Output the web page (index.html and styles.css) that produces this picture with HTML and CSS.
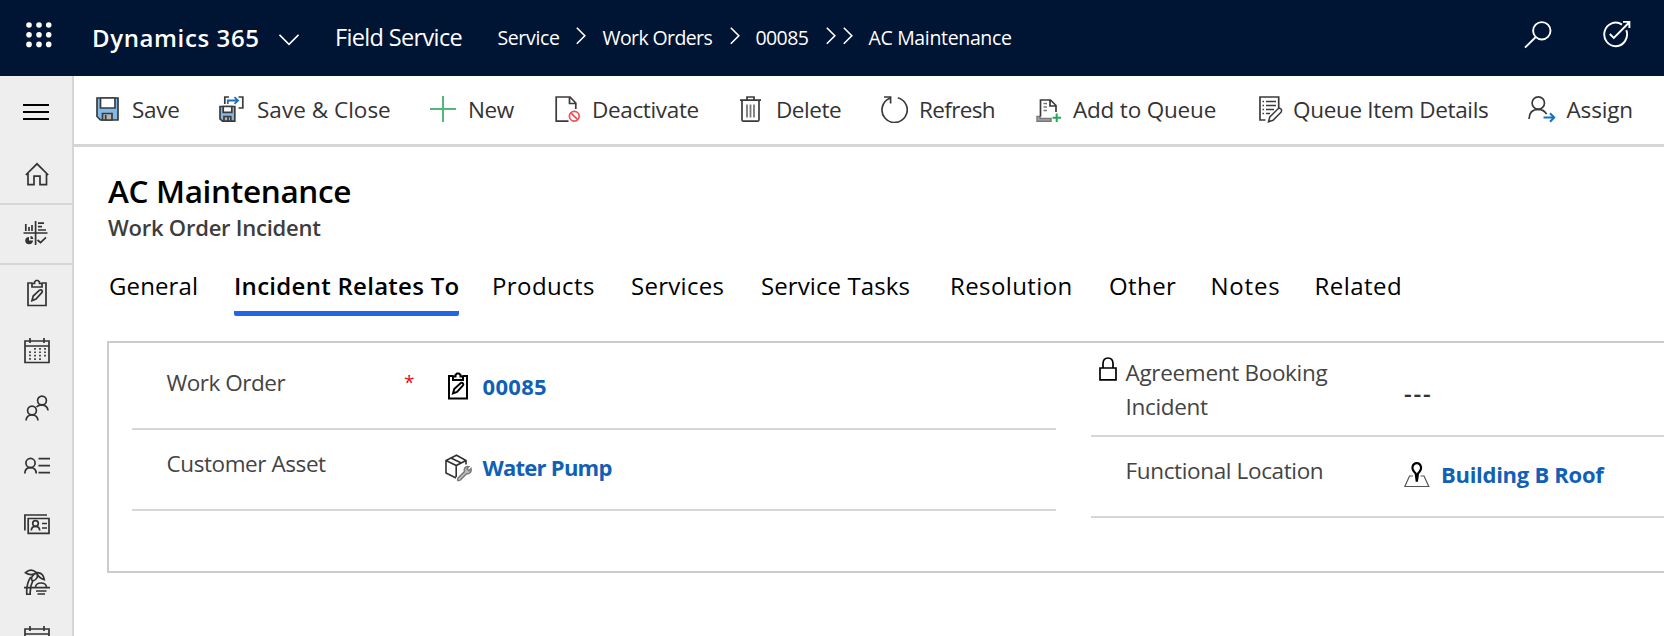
FILE: index.html
```
<!DOCTYPE html>
<html lang="en">
<head>
<meta charset="utf-8">
<title>AC Maintenance - Dynamics 365</title>
<link rel="stylesheet" href="styles.css">
</head>
<body>
<svg class="defs" aria-hidden="true">
  <symbol id="clipboard" viewBox="0 0 26 28">
    <path d="M8.5 4H4V26.5H22V4H17.5M8 8V4.5H10.5V3L12 1.5H14L15.5 3V4.5H18V8Z" />
    <path d="M8 21.5L9.2 17L15.5 11.2Q17 10.4 18 11.4Q18.8 12.5 17.8 13.6L12 20L8 21.5Z" />
  </symbol>
  <symbol id="calendar" viewBox="0 0 26 26">
    <path d="M1 3H25V24.5H1ZM1 8H25M6 0V5M20 0V5" />
    <path stroke-dasharray="1.7 1.7" d="M6 13.2V22M11 10V22M16 10V22M21 10V18.7" />
  </symbol>
</svg>

<header class="topbar">
  <svg class="waffle" width="26" height="26" viewBox="0 0 26 26">
    <g fill="#fff"><circle cx="3" cy="3" r="2.8"/><circle cx="13" cy="3" r="2.8"/><circle cx="22.7" cy="3" r="2.8"/><circle cx="3" cy="12.7" r="2.8"/><circle cx="13" cy="12.7" r="2.8"/><circle cx="22.7" cy="12.7" r="2.8"/><circle cx="3" cy="22.4" r="2.8"/><circle cx="13" cy="22.4" r="2.8"/><circle cx="22.7" cy="22.4" r="2.8"/></g>
  </svg>
  <span class="brand">Dynamics 365</span>
  <svg class="chev-down" width="20" height="12" viewBox="0 0 20 12"><path d="M.5 .8L10 10.3L19.5 .8"/></svg>
  <span class="app">Field Service</span>
  <nav class="crumbs">
    <span class="c-service">Service</span>
    <svg class="chev" width="10" height="18" viewBox="0 0 10 18"><path d="M.8 .7L8.8 8.7L.8 16.7"/></svg>
    <span class="c-orders">Work Orders</span>
    <svg class="chev" width="10" height="18" viewBox="0 0 10 18"><path d="M.8 .7L8.8 8.7L.8 16.7"/></svg>
    <span class="c-number">00085</span>
    <svg class="chev" width="28" height="18" viewBox="0 0 28 18"><path d="M.8 .7L8.8 8.7L.8 16.7M17.8 .7L25.8 8.7L17.8 16.7"/></svg>
    <span class="c-record">AC Maintenance</span>
  </nav>
  <svg class="search" width="28" height="28" viewBox="0 0 28 28"><circle cx="17.8" cy="9.8" r="8.7"/><path d="M11.8 16L1 26.6"/></svg>
  <svg class="target" width="28" height="28" viewBox="0 0 28 28"><path d="M19 4.6A11.4 11.8 0 1 0 23.3 10.2M6.8 14L10.8 18L25.6 3M20 1.9H26.4V8"/></svg>
</header>

<div class="body">
  <aside class="rail">
    <div class="cell menu"><svg width="26" height="16" viewBox="0 0 26 16"><path d="M0 1H26M0 8H26M0 15H26"/></svg></div>
    <div class="cell home"><svg width="26" height="26" viewBox="0 0 26 26"><path d="M1.8 14L13 2.8L24.2 14M4 12V23.7H10V15.2H16V23.7H22.5V12"/></svg></div>
    <div class="cell dash"><svg width="26" height="26" viewBox="0 0 26 26"><path d="M12.6 1V25M.5 13H24.5M2.8 4V11M6 7V11M9 5V11M15 3.2H21M15 6.6H19M15 10H23"/><path d="M14.5 20L17.5 22.5L23 17.3"/><path class="solid" d="M6 17V20.5H10Q9.7 24.3 6 24.3Q2.2 24 2.2 20.5Q2.4 17 6 17ZM7.5 16Q10 16 10.3 19H7.5Z"/></svg></div>
    <div class="cell r57"><svg width="26" height="28"><use href="#clipboard"/></svg></div>
    <div class="cell r58"><svg width="26" height="26"><use href="#calendar"/></svg></div>
    <div class="cell r57"><svg width="26" height="26" viewBox="0 0 26 26"><circle cx="18" cy="5.5" r="4.4"/><circle cx="8" cy="15.5" r="4.4"/><path d="M2 25.5Q2.5 20 8 20Q13.5 20 14 25.5M12.5 12Q14.5 9.8 18 9.8Q23.5 10.3 24 15.5"/></svg></div>
    <div class="cell r58"><svg width="26" height="26" viewBox="0 0 26 26"><circle cx="6.5" cy="10" r="4.6"/><path d="M.8 20.5Q1 14.6 6.5 14.6Q12 14.6 12.2 20.5M14.5 5.6H26M14.5 12.6H26M14.5 19.6H26"/></svg></div>
    <div class="cell r58"><svg width="26" height="26" viewBox="0 0 26 26"><path d="M.9 19.5V4H23M4.2 7.5H25V22.4H4.2ZM18 12.5H23M18 17H23"/><circle cx="11.5" cy="12.5" r="2.8"/><path d="M7.3 19.5Q7.5 15.3 11.5 15.3Q15.5 15.3 15.7 19.5"/></svg></div>
    <div class="cell r58"><svg width="26" height="26" viewBox="0 0 26 26"><path d="M1.5 3.7Q7-1.5 12.5 3.7Q7 7.6 1.5 3.7ZM12.5 3.7Q19 3 20.3 10.7Q15 9.5 12.5 3.7ZM12.5 3.7Q15.5 9.5 8.5 12.3Q5.5 7.5 12.5 3.7M6.8 8Q2 15 2.8 25.3H6.2Q5.8 17.5 8.7 12.2M0 18.7H26M11.5 18Q12 14 17 14Q22 14 22.5 18M12 22H22.5M13.5 25H21"/></svg></div>
    <div class="cell r57"><svg width="26" height="26"><use href="#calendar"/></svg></div>
  </aside>

  <main class="main">
    <div class="commands">
      <div class="cmd save"><svg width="26" height="28" viewBox="0 0 26 28"><path fill="#83b9e6" d="M2 3H23V25H5.5L2 21.5Z"/><path fill="#fff" d="M5.5 3H20V13H5.5Z"/><path fill="#b5b5b5" d="M7.5 18.5H17V25H7.5Z"/><path d="M10.7 20V25"/></svg><span>Save</span></div>
      <div class="cmd close"><svg width="26" height="28" viewBox="0 0 26 28"><path fill="#83b9e6" d="M2 11.5H16.8V26.2H4.5L2 23.8Z"/><path fill="#fff" d="M5.2 11.5H13.8V17.3H5.2Z"/><path fill="#b5b5b5" d="M6 21.5H12.8V26H6Z"/><path d="M10 22V26M11 2H6.8V9M20.5 2H24.8V13H20.5"/><path stroke="#1b70bd" stroke-width="1.8" d="M9.8 9V5.5H19.5M16.5 2.2L20 5.5L16.5 8.8"/></svg><span>Save &amp; Close</span></div>
      <div class="cmd new"><svg width="26" height="28" viewBox="0 0 26 28"><path stroke="#50b978" stroke-width="2" d="M13 1V27M0 14H26"/></svg><span>New</span></div>
      <div class="cmd deactivate"><svg width="26" height="28" viewBox="0 0 26 28"><path d="M13.5 26.2H1.2V2H15L20.8 8V14M14.5 2V8.5H20.8"/><g stroke="#ee4f55" stroke-width="1.7"><circle cx="19.3" cy="21.3" r="4.9"/><path d="M15.9 17.9L22.7 24.7"/></g></svg><span>Deactivate</span></div>
      <div class="cmd delete"><svg width="26" height="28" viewBox="0 0 26 28"><path d="M2 5.2H23M4 5.2V24.5Q4 26.2 5.5 26.2H19.5Q21 26.2 21 24.5V5.2M9 5V2H16V5"/><path stroke="#777" stroke-width="1.8" d="M9 9.5V22.5M12.5 9.5V22.5M16 9.5V22.5"/></svg><span>Delete</span></div>
      <div class="cmd refresh"><svg width="27" height="28" viewBox="0 0 27 28"><path d="M8.9 3.2A12.6 12.6 0 1 0 16.8 2.7M3 2H9.6V8.5"/></svg><span>Refresh</span></div>
      <div class="cmd queue"><svg width="26" height="28" viewBox="0 0 26 28"><path fill="#aaa" stroke="#777" stroke-width="1.4" d="M1 21.5H4V23.5H15V26.3H1Z"/><path d="M4.5 21.5V5H14.5L20 10.5V17M14 5V11H20"/><path stroke="#777" stroke-width="1.5" d="M7.5 8.5H11M7.5 12H11M7.5 15.5H11"/><path stroke="#27a955" stroke-width="2" d="M20.7 18.5V27M16.5 22.7H25"/></svg><span>Add to Queue</span></div>
      <div class="cmd details"><svg width="26" height="28" viewBox="0 0 26 28"><path d="M7.5 25H2V2H20.7V13"/><path stroke-width="1.6" d="M4.5 6.5H6M8 6.5H18M4.5 10.5H6M8 10.5H18M4.5 14.5H6M8 14.5H16M4.5 18.5H6M8 18.5H12"/><path stroke-width="1.5" d="M10.5 26.8L11.8 22L19.8 14Q21.5 12.7 23 14Q24.2 15.5 23 17.2L15 25.3Z"/></svg><span>Queue Item Details</span></div>
      <div class="cmd assign"><svg width="28" height="28" viewBox="0 0 28 28"><circle cx="10.3" cy="8" r="6.2"/><path d="M1 24Q1.3 14.4 10.3 14.4Q16 14.6 18.5 19"/><path stroke="#1b70bd" stroke-width="2" d="M15.5 22.5H26M22 18.3L26.2 22.5L22 26.7"/></svg><span>Assign</span></div>
    </div>

    <h1 class="title">AC Maintenance</h1>
    <p class="subtitle">Work Order Incident</p>

    <nav class="tabs">
      <span class="t-general">General</span>
      <span class="active">Incident Relates To</span>
      <span class="t-products">Products</span>
      <span class="t-services">Services</span>
      <span class="t-tasks">Service Tasks</span>
      <span class="t-products">Resolution</span>
      <span class="t-products">Other</span>
      <span class="t-notes">Notes</span>
      <span class="t-related">Related</span>
    </nav>

    <section class="form">
      <div class="column left">
        <div class="row first">
          <span class="label l-order">Work Order</span>
          <span class="required">*</span>
          <svg class="ico dark" width="26" height="28"><use href="#clipboard"/></svg>
          <a class="value v-num">00085</a>
        </div>
        <div class="row">
          <span class="label l-asset">Customer Asset</span>
          <span class="required"></span>
          <svg class="ico box" width="28" height="28" viewBox="0 0 28 28"><path d="M11 24L1 19V6.5L11.5 1.2L21 6.5V10.5M1 6.5L11.2 11.5L21 6.5M11.2 11.5V23M6 4L16.3 9"/><path fill="#bbb" stroke="#777" stroke-width="1.4" d="M13 24L19.5 17.5Q18.5 14.5 21 12.9Q22.5 12 24 12.6L22 15L24 16.8L26 14.5Q26.8 18.5 23.5 19.6Q22.5 20 21.5 19.7L15.5 26Q13.5 27.3 12.5 26Z"/></svg>
          <a class="value v-pump">Water Pump</a>
        </div>
      </div>
      <div class="column right">
        <div class="row first">
          <svg class="lock" width="18" height="25" viewBox="0 0 18 25"><path d="M1 12H17V23.8H1ZM4 11.5V7.3Q4.3 2 9 2Q13.7 2 14 7.3V11.5"/></svg>
          <span class="label l-agreement">Agreement Booking<br>Incident</span>
          <span class="empty">---</span>
        </div>
        <div class="row">
          <span class="lock"></span>
          <span class="label l-location">Functional Location</span>
          <svg class="ico pin" width="26" height="28" viewBox="0 0 26 28"><path stroke="#555" stroke-width="1.2" d="M9 15H5.5L.8 25.5H24.8L20 15H16.5"/><path stroke="#000" stroke-width="2.2" d="M12.8 20.5L11.7 12.5Q8 9 8.5 6Q9.4 2.2 12.8 2.2Q16.2 2.2 17 6Q17.5 9 14 12.5Z"/></svg>
          <a class="value v-roof">Building B Roof</a>
        </div>
      </div>
    </section>
  </main>
</div>
</body>
</html>
```
FILE: styles.css
```
* { box-sizing: border-box; }

body {
  margin: 0;
  height: 636px;
  overflow: hidden;
  background: #fff;
  color: #000;
  font-family: "Open Sans", "Noto Sans", sans-serif;
  font-size: 22.5px;
  white-space: nowrap;
}

svg {
  flex: none;
  fill: none;
  stroke: #333;
  stroke-width: 2;
}

.defs { display: none; }

/* Top navigation */
.topbar {
  display: flex;
  align-items: center;
  height: 76px;
  padding: 0 0 2px 26px;
  background: #001433;
  color: #fff;
  font-size: 23.5px;
}
.topbar svg { stroke: #fff; stroke-width: 1.6; }
.topbar .waffle { stroke: none; margin-bottom: 4px; }
.brand { width: 187px; margin: 1px 0 0 40px; font-weight: 600; font-size: 24px; letter-spacing: .62px; }
.chev-down { margin-top: 5px; }
.app { width: 162.4px; margin-left: 36px; letter-spacing: -.65px; }
.crumbs { display: flex; align-items: center; font-size: 19.5px; }
.crumbs .chev { margin-top: -3px; }
.c-service { width: 79.1px; letter-spacing: -.34px; }
.c-orders { width: 127.5px; margin-left: 16px; letter-spacing: -.6px; }
.c-number { width: 70.5px; margin-left: 15.5px; letter-spacing: -.6px; }
.c-record { width: 145px; margin-left: 14.5px; letter-spacing: -.34px; }
.topbar .search { margin: -5px 0 0 511px; stroke-width: 1.9; }
.topbar .target { margin: -6px 0 0 51px; stroke-width: 1.9; }

/* Shell */
.body { display: flex; height: 560px; }
.rail {
  flex: none;
  width: 74px;
  overflow: hidden;
  background: #eee;
  border-right: 2px solid #d6d6d6;
}
.cell { display: flex; align-items: center; justify-content: center; padding-left: 2px; }
.cell svg { stroke-width: 1.7; }
.menu { height: 69px; padding: 2px 0 0; }
.menu svg { stroke: #000; stroke-width: 2; }
.home { height: 60px; border-bottom: 2px solid #d6d6d6; }
.dash { height: 60px; padding: 0 0 2px; border-bottom: 2px solid #d6d6d6; }
.solid { fill: #333; stroke: none; }
.r57 { height: 57px; padding-bottom: 1px; }
.r58 { height: 58px; }
.main { flex: 1; min-width: 0; overflow: hidden; }

/* Command bar */
.commands {
  display: grid;
  grid-template-columns: 123px 212px 125px 183px 143px 155px 222px 270px 136px;
  height: 71px;
  padding-left: 21px;
  border-bottom: 3px solid #d6d6d6;
  color: #333;
}
.cmd { display: flex; align-items: center; padding-bottom: 2px; }
.cmd svg { stroke: #3b3b3b; stroke-width: 1.7; }
.save { gap: 11px; letter-spacing: -.25px; }
.close { gap: 13px; letter-spacing: .02px; }
.new { gap: 12px; letter-spacing: -.4px; }
.deactivate { gap: 11px; letter-spacing: -.35px; }
.delete { gap: 12px; letter-spacing: -.46px; }
.refresh { gap: 11px; letter-spacing: -.65px; }
.queue { gap: 11px; letter-spacing: -.19px; }
.details { gap: 9px; letter-spacing: -.33px; }
.assign { gap: 10.5px; letter-spacing: -.15px; }

/* Record heading */
.title {
  margin: 24px 0 0 34px;
  font-size: 31.5px;
  font-weight: 600;
  line-height: 40px;
  letter-spacing: -.33px;
}
.subtitle {
  margin: 1px 0 0 34px;
  color: #3d3d3d;
  font-size: 22px;
  font-weight: 600;
  line-height: 30px;
  letter-spacing: -.24px;
}

.tabs {
  display: grid;
  grid-template-columns: 125px 258px 139px 130px 189px 159px 101.5px 104px 100px;
  margin: 27px 0 0 35px;
  font-size: 24px;
  line-height: 34px;
}
.active {
  width: 225px;
  height: 47px;
  border-bottom: 5px solid #2266e3;
  border-radius: 2px;
  font-weight: 600;
  letter-spacing: .28px;
}
.t-general { letter-spacing: .12px; }
.t-products { letter-spacing: .4px; }
.t-services { letter-spacing: .29px; }
.t-tasks { letter-spacing: .1px; }
.t-notes { letter-spacing: .8px; }
.t-related { letter-spacing: .45px; }

/* Form section */
.form {
  display: flex;
  gap: 35px;
  height: 232px;
  margin: 25px 0 0 33px;
  padding-left: 23px;
  border: 2px solid #ccc;
  border-right: 0;
}
.left { flex: none; width: 924px; }
.right { flex: 1; }
.row {
  display: flex;
  height: 81px;
  padding-top: 17px;
  border-bottom: 2px solid #d6d6d6;
  line-height: 34px;
}
.left .row { padding-left: 34.5px; }
.left .first { height: 87px; padding-top: 23px; }
.right .row { padding-left: 8px; }
.right .first { height: 94px; padding-top: 13px; }
.label { color: #444; }
.left .label { width: 237.5px; }
.l-order { letter-spacing: -.47px; }
.l-asset { letter-spacing: -.42px; }
.right .label { width: 278.5px; margin-left: 8.5px; }
.l-agreement { letter-spacing: -.31px; }
.l-location { letter-spacing: -.36px; }
.required { width: 41px; color: #e00b1c; font-size: 19px; line-height: 33px; }
.ico { margin-top: 6px; }
.dark { stroke: #000; }
.box { stroke-width: 1.6; margin-top: 7px; }
.value { margin-top: 3px; color: #1160b7; font-size: 22px; font-weight: 700; }
.v-num { margin-left: 11.5px; letter-spacing: .3px; }
.v-pump { margin-left: 9.5px; letter-spacing: -.75px; }
.v-roof { margin-left: 11px; letter-spacing: -.28px; }
.lock { flex: none; width: 18px; stroke: #000; stroke-width: 1.7; }
.empty { margin-top: 20px; color: #333; font-size: 24px; font-weight: 600; letter-spacing: 1.8px; }
.pin { margin-top: 7px; }
```
